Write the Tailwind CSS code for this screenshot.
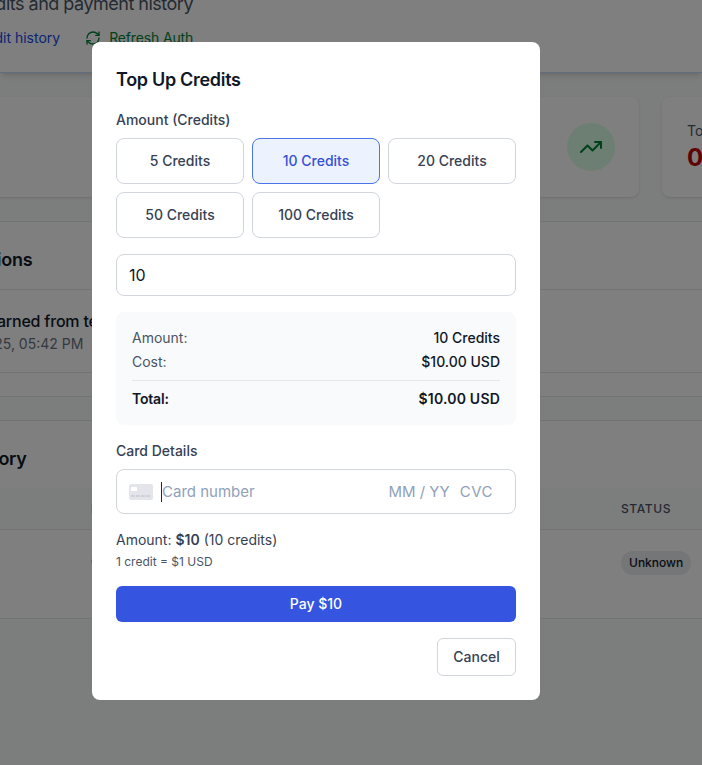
<!DOCTYPE html>
<html><head><meta charset="utf-8"><script src="https://cdn.jsdelivr.net/npm/@tailwindcss/browser@4"></script></head>
<body class="font-['Inter',sans-serif]">
<div class="relative h-[765px] w-[702px] overflow-hidden bg-gray-50">
  <!-- page behind the dialog -->
  <header class="relative h-[73px] overflow-hidden border-b border-blue-200 bg-white shadow-md">
    <p class="-mt-[10px] -ml-[72px] h-[28px] whitespace-nowrap text-lg leading-[28px] tracking-[-0.5px] text-gray-600">Your credits and payment history</p>
    <div class="mt-[10px] -ml-[29px] flex items-center gap-[25px] text-sm">
      <span class="text-blue-700 whitespace-nowrap">Credit history</span>
      <span class="flex items-center gap-2 text-green-700 whitespace-nowrap tracking-[-0.15px]">
        <svg class="h-4 w-4" viewBox="0 0 24 24" fill="none" stroke="currentColor" stroke-width="2" stroke-linecap="round" stroke-linejoin="round"><path d="M3 12a9 9 0 0 1 9-9 9.75 9.75 0 0 1 6.74 2.74L21 8"/><path d="M21 3v5h-5"/><path d="M21 12a9 9 0 0 1-9 9 9.75 9.75 0 0 1-6.74-2.74L3 16"/><path d="M8 16H3v5"/></svg>
        Refresh Auth
      </span>
    </div>
  </header>
  <div class="h-[24px]"></div>
  <div class="flex -ml-[40px] gap-[23px]">
    <div class="flex h-[100px] w-[679px] shrink-0 items-center justify-end rounded-lg bg-white pr-6 shadow-sm">
      <div class="flex h-12 w-12 items-center justify-center rounded-full bg-green-100 text-green-700">
        <svg class="h-6 w-6" viewBox="0 0 24 24" fill="none" stroke="currentColor" stroke-width="2" stroke-linecap="round" stroke-linejoin="round"><path d="M22 7 13.5 15.5 8.5 10.5 2 17"/><path d="M16 7h6v6"/></svg>
      </div>
    </div>
    <div class="h-[100px] w-[200px] shrink-0 rounded-lg bg-white pl-[25px] pt-[24px] shadow-sm">
      <p class="text-sm leading-5 text-gray-600 whitespace-nowrap">Total Spent</p>
      <p class="mt-[1px] text-2xl leading-8 font-bold text-red-700">0</p>
    </div>
  </div>
  <section class="mt-6 h-[176px] w-[702px] overflow-hidden border-y border-gray-200 bg-white">
    <div class="flex h-[68px] items-center border-b border-gray-200 pt-[9px]">
      <h2 class="-ml-[77px] text-lg leading-7 font-semibold tracking-[-0.3px] text-gray-900 whitespace-nowrap">Transactions</h2>
    </div>
    <div class="h-[83px] border-b border-gray-200 pt-[19px]">
      <p class="-ml-[70px] text-base leading-6 font-medium tracking-[-0.2px] text-gray-900 whitespace-nowrap">Credits earned from test</p>
      <p class="mt-[1px] -ml-[78px] text-sm leading-5 text-gray-500 whitespace-nowrap">Dec 25, 2025, 05:42 PM</p>
    </div>
  </section>
  <section class="mt-[23px] h-[199px] w-[702px] overflow-hidden border-y border-gray-200 bg-white">
    <div class="flex h-[67px] items-center pt-[8px]">
      <h2 class="-ml-[113px] text-lg leading-7 font-semibold tracking-[-0.3px] text-gray-900 whitespace-nowrap">Payment History</h2>
    </div>
    <div class="relative h-[42px] border-b border-gray-200 bg-gray-50 text-xs font-medium tracking-wider text-gray-600">
      <span class="absolute top-[13px] left-[91px]">DATE</span>
      <span class="absolute top-[13px] left-[621px]">STATUS</span>
    </div>
    <div class="relative h-[89px] text-sm text-gray-900">
      <span class="absolute top-[22px] left-[91px] whitespace-nowrap">Oct 2025</span>
      <span class="absolute top-[21px] left-[621px] rounded-full bg-[#ebecef] px-2 py-1 text-xs leading-4 font-medium text-gray-900">Unknown</span>
    </div>
  </section>
  <!-- overlay -->
  <div class="absolute inset-0 flex items-start bg-black/50 pt-[42px] pl-[92px] backdrop-blur-[0.5px]">
    <div class="h-[658px] w-[448px] rounded-lg bg-white p-6">
      <h3 class="text-lg leading-7 font-semibold tracking-[-0.3px] text-gray-900">Top Up Credits</h3>
      <p class="mt-[16px] text-sm leading-5 font-[450] text-gray-700">Amount (Credits)</p>
      <div class="mt-2 grid grid-cols-3 gap-2">
        <button class="h-[46px] rounded-lg border border-gray-300 text-sm font-[450] text-gray-700">5 Credits</button>
        <button class="h-[46px] rounded-lg border border-[#4a74e8] bg-[#edf3fe] text-sm font-[450] text-[#3650d8]">10 Credits</button>
        <button class="h-[46px] rounded-lg border border-gray-300 text-sm font-[450] text-gray-700">20 Credits</button>
        <button class="h-[46px] rounded-lg border border-gray-300 text-sm font-[450] text-gray-700">50 Credits</button>
        <button class="h-[46px] rounded-lg border border-gray-300 text-sm font-[450] text-gray-700">100 Credits</button>
      </div>
      <div class="mt-4 flex h-[42px] items-center rounded-lg border border-gray-300 px-3 text-base text-gray-900">10</div>
      <div class="mt-4 h-[113px] rounded-lg bg-gray-50 px-4 pt-4 text-sm">
        <div class="flex justify-between leading-5"><span class="text-gray-600">Amount:</span><span class="font-medium text-gray-900">10 Credits</span></div>
        <div class="mt-1 flex justify-between leading-5"><span class="text-gray-600">Cost:</span><span class="font-medium text-gray-900">$10.00 USD</span></div>
        <div class="mt-2 flex justify-between border-t border-gray-200 pt-2 leading-5 font-semibold text-gray-900"><span class="tracking-[-0.2px]">Total:</span><span class="tracking-[0.2px]">$10.00 USD</span></div>
      </div>
      <p class="mt-4 text-sm leading-5 font-[450] text-gray-700">Card Details</p>
      <div class="mt-2 flex h-[45px] items-center rounded-lg border border-gray-300 pl-3 pr-[22px] text-[15px] text-slate-400">
        <svg class="h-[16px] w-[24px] shrink-0" viewBox="0 0 24 16"><rect width="24" height="16" rx="2" fill="#e3e5ea"/><rect x="2" y="3" width="6" height="4" rx="0.5" fill="#ffffff"/><path d="M2 12h20" stroke="#b9bec8" stroke-width="1" stroke-dasharray="4 1"/></svg>
        <span class="ml-2 h-[20px] w-px bg-gray-800"></span>
        <span class="pt-[2px]">Card number</span>
        <span class="ml-auto pt-[2px]">MM / YY</span>
        <span class="ml-[10px] pt-[2px] tracking-[0.5px]">CVC</span>
      </div>
      <p class="mt-4 text-sm leading-5 text-gray-700">Amount: <b class="font-semibold">$10</b> (10 credits)</p>
      <p class="mt-1 text-xs leading-4 text-gray-600">1 credit = $1 USD</p>
      <button class="mt-4 h-9 w-full rounded-md bg-[#3554e0] text-sm font-medium text-white">Pay $10</button>
      <div class="mt-4 flex justify-end">
        <button class="h-[38px] w-[79px] rounded-md border border-gray-300 text-sm font-[450] text-gray-700">Cancel</button>
      </div>
    </div>
  </div>
</div>
</body></html>
